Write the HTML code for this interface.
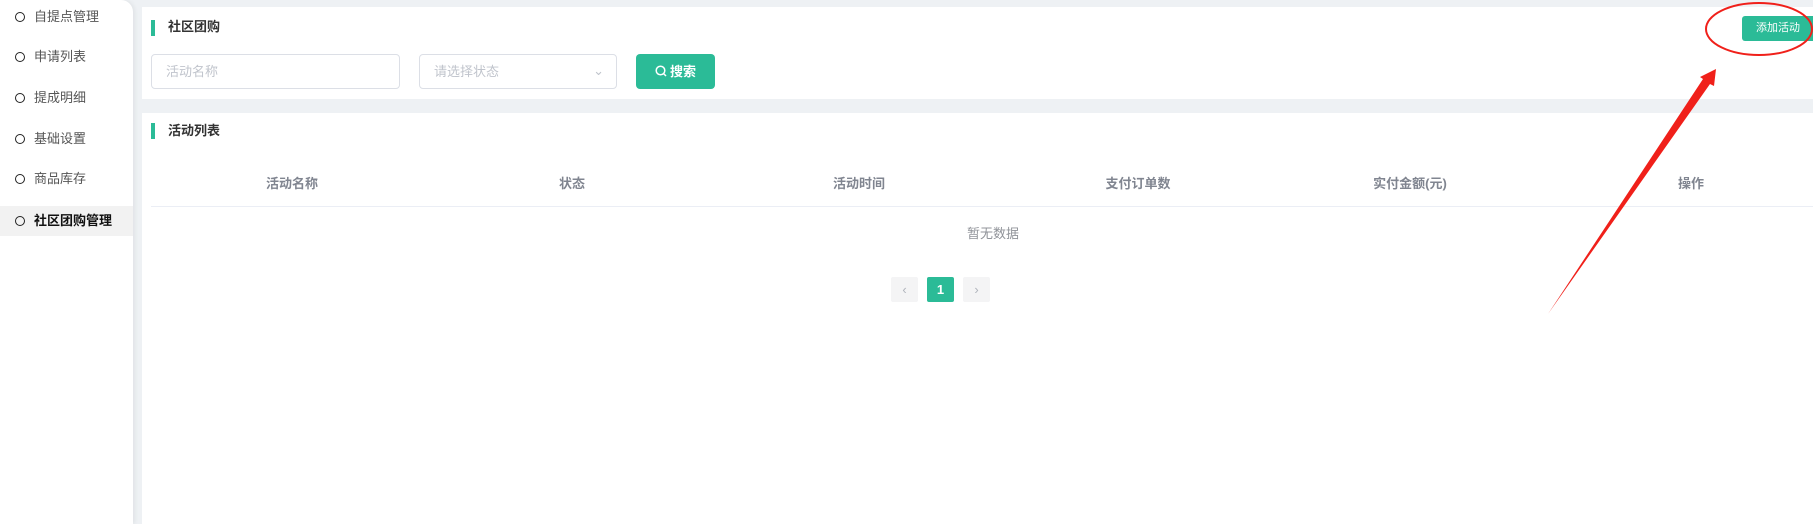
<!DOCTYPE html><html><head><meta charset="utf-8"><style>
*{margin:0;padding:0;box-sizing:border-box}
body{width:1813px;height:524px;background:#eef1f4;font-family:"Liberation Sans","Noto Sans CJK SC",sans-serif;font-size:13px;position:relative;overflow:hidden}
.a{position:absolute}
.side{left:0;top:0;width:133px;height:524px;background:#fff;border-top-right-radius:12px;box-shadow:2px 0 4px rgba(0,0,0,.06)}
.it{position:absolute;left:0;width:133px;height:30px;line-height:30px;padding-left:34px;color:#555}
.it:before{content:"";position:absolute;left:15px;top:10px;width:8px;height:8px;border:1.6px solid #222;border-radius:50%}
.card{background:#fff;left:142px;right:0}
.bar{width:4px;height:16px;background:#2bbb97}
.tt{font-weight:bold;color:#333;line-height:18px}
.inp{border:1px solid #dcdfe6;border-radius:4px;background:#fff;color:#c0c4cc;padding-left:14px;line-height:33px;height:35px}
.th{top:175px;line-height:18px;color:#808590;font-weight:bold;transform:translateX(-50%)}
.pg{top:277px;width:27px;height:25px;background:#f4f4f5;border-radius:2px;color:#b0b4bc;text-align:center;line-height:25px}
</style></head><body>
<div class="a side">
<div class="it" style="top:2px">自提点管理</div>
<div class="it" style="top:42px">申请列表</div>
<div class="it" style="top:83px">提成明细</div>
<div class="it" style="top:124px">基础设置</div>
<div class="it" style="top:164px">商品库存</div>
<div class="it" style="top:206px;background:#f2f2f2;color:#111;font-weight:bold">社区团购管理</div>
</div>
<div class="a card" style="top:7px;height:92px"></div>
<div class="a card" style="top:113px;height:411px"></div>
<div class="a bar" style="left:151px;top:20px"></div>
<div class="a tt" style="left:168px;top:18px">社区团购</div>
<div class="a inp" style="left:151px;top:54px;width:249px">活动名称</div>
<div class="a inp" style="left:419px;top:54px;width:198px">请选择状态<span style="position:absolute;right:12px;top:-1px;color:#c0c4cc">&#8964;</span></div>
<div class="a" style="left:636px;top:54px;width:79px;height:35px;background:#2bbb97;border-radius:4px;color:#fff;font-weight:bold;line-height:35px;text-align:center"><svg width="12" height="12" viewBox="0 0 12 12" style="vertical-align:-1px;margin-right:3px"><circle cx="5.5" cy="5.5" r="4.3" fill="none" stroke="#fff" stroke-width="1.5"/><path d="M8.5 8.5 11 11" stroke="#fff" stroke-width="1.5"/></svg>搜索</div>
<div class="a" style="left:1742px;top:16px;width:71px;height:25px;background:#2bbb97;border-radius:3px 0 0 3px;color:#fff;font-size:11px;line-height:25px;padding-left:14px">添加活动</div>
<div class="a bar" style="left:151px;top:123px"></div>
<div class="a tt" style="left:168px;top:122px">活动列表</div>
<div class="a th" style="left:292px">活动名称</div>
<div class="a th" style="left:572px">状态</div>
<div class="a th" style="left:859px">活动时间</div>
<div class="a th" style="left:1138px">支付订单数</div>
<div class="a th" style="left:1410px">实付金额(元)</div>
<div class="a th" style="left:1691px">操作</div>
<div class="a" style="left:151px;right:0;top:206px;height:1px;background:#ebeef5"></div>
<div class="a" style="left:967px;top:225px;line-height:18px;color:#909399">暂无数据</div>
<div class="a pg" style="left:891px">&lsaquo;</div>
<div class="a pg" style="left:927px;background:#2bbb97;color:#fff;font-weight:bold">1</div>
<div class="a pg" style="left:963px">&rsaquo;</div>
<svg class="a" style="left:0;top:0" width="1813" height="524"><ellipse cx="1759" cy="29" rx="53" ry="26" fill="none" stroke="#f0201a" stroke-width="2"/><path d="M1548 314 L1703 79 L1700 77 L1716 69 L1714 86 L1710 84 Z" fill="#f0201a"/></svg>
</body></html>
